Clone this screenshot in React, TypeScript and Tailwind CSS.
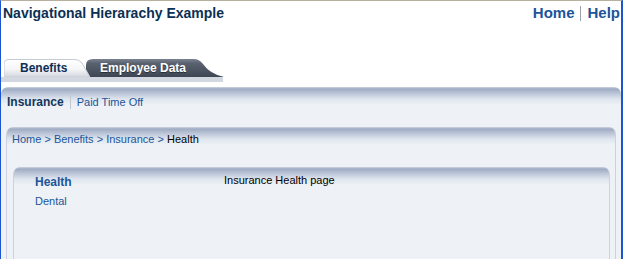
import React from "react";

const panelTop =
  "bg-[linear-gradient(to_bottom,#cdd4e1_0px,#9fabc4_2px,#b9c3d6_6px,#dfe5ee_12px,#eef2f6_18px)]";

const Tabs = () => (
  <div className="flex items-end h-[18px] pl-[3px]">
    {/* Benefits (selected) */}
    <div className="relative z-10 h-[18px] w-[86px]">
      <svg className="absolute inset-0" width="86" height="18" viewBox="0 0 86 18">
        <defs>
          <linearGradient id="tabLight" x1="0" y1="0" x2="0" y2="1">
            <stop offset="0" stopColor="#ffffff" />
            <stop offset="0.55" stopColor="#f5f6f8" />
            <stop offset="1" stopColor="#d3d7df" />
          </linearGradient>
        </defs>
        <path
          d="M0 18 L0 5 Q0 0.5 5 0.5 L71 0.5 Q75 0.5 78 4 L86 18 Z"
          fill="url(#tabLight)"
          stroke="#c6cad3"
          strokeWidth="1"
        />
      </svg>
      <span className="relative block pl-[16px] pt-[2px] text-[12px] font-bold text-[#0f2f55] leading-[14px]">
        Benefits
      </span>
    </div>
    {/* Employee Data */}
    <div className="relative -ml-[4px] h-[18px] w-[138px]">
      <svg className="absolute inset-0" width="138" height="18" viewBox="0 0 138 18">
        <defs>
          <linearGradient id="tabDark" x1="0" y1="0" x2="0" y2="1">
            <stop offset="0" stopColor="#7a8291" />
            <stop offset="0.25" stopColor="#59616f" />
            <stop offset="1" stopColor="#3f4653" />
          </linearGradient>
        </defs>
        <path
          d="M0 18 L0 6 Q0 0 7 0 L108 0 Q113 0 117 5 Q124 15 138 18 Z"
          fill="url(#tabDark)"
        />
      </svg>
      <span className="relative block pl-[14px] pt-[2px] text-[12px] font-bold text-white leading-[14px] [text-shadow:0_1px_0_#2a303a]">
        Employee Data
      </span>
    </div>
  </div>
);

export default function App() {
  return (
    <div
      className="w-[623px] h-[259px] overflow-hidden bg-white border-t border-[#b7b09f] border-l border-l-[#1d55d0] border-r-2 border-r-[#1d55d0] flex flex-col"
      style={{ fontFamily: '"Liberation Sans", Arial, sans-serif' }}
    >
      {/* Header */}
      <div className="flex justify-between items-start h-[58px] pl-[2px] pr-[1px] pt-[3px]">
        <div className="text-[14px] font-bold text-[#0b2f55] leading-[18px]">
          Navigational Hierarachy Example
        </div>
        <div className="flex items-center text-[15px] font-bold text-[#1c5599] leading-[18px]">
          <span>Home</span>
          <span className="ml-[6px] mr-[6px] w-px h-[15px] bg-[#9aa3ad]" />
          <span>Help</span>
        </div>
      </div>

      <Tabs />
      <div className="h-[5px] w-[222px] bg-[#d3d7df]" />
      <div className="h-[5px]" />

      {/* Outer panel */}
      <div className={`flex-1 rounded-t-[7px] ${panelTop} flex flex-col`}>
        <div className="flex items-center h-[28px] pl-[6px] pt-[1px] leading-[14px]">
          <span className="text-[12px] font-bold text-[#13365c]">Insurance</span>
          <span className="ml-[6px] mr-[6px] w-px h-[15px] bg-[#c2c8d2]" />
          <span className="text-[11px] text-[#1c5599]">Paid Time Off</span>
        </div>
        <div className="h-[12px]" />

        {/* Breadcrumb panel */}
        <div
          className={`flex-1 ml-[5px] mr-[5px] rounded-t-[7px] border-x border-[#cbd2dd] ${panelTop} flex flex-col`}
        >
          <div className="h-[40px] pl-[5px] pt-[6px] text-[11px] leading-[13px] text-[#1c5599]">
            Home &gt; Benefits &gt; Insurance &gt; <span className="text-black">Health</span>
          </div>

          {/* Content panel */}
          <div
            className={`flex-1 ml-[6px] mr-[5px] rounded-t-[7px] border-x border-[#cbd2dd] ${panelTop} flex`}
          >
            <div className="w-[210px] pl-[21px] pt-[8px] leading-[13px]">
              <div className="text-[12px] font-bold text-[#1c5599] leading-[15px]">Health</div>
              <div className="mt-[5px] text-[11px] text-[#1c5599]">Dental</div>
            </div>
            <div className="pt-[7px] text-[11px] leading-[13px] text-black">
              Insurance Health page
            </div>
          </div>
        </div>
      </div>
    </div>
  );
}
